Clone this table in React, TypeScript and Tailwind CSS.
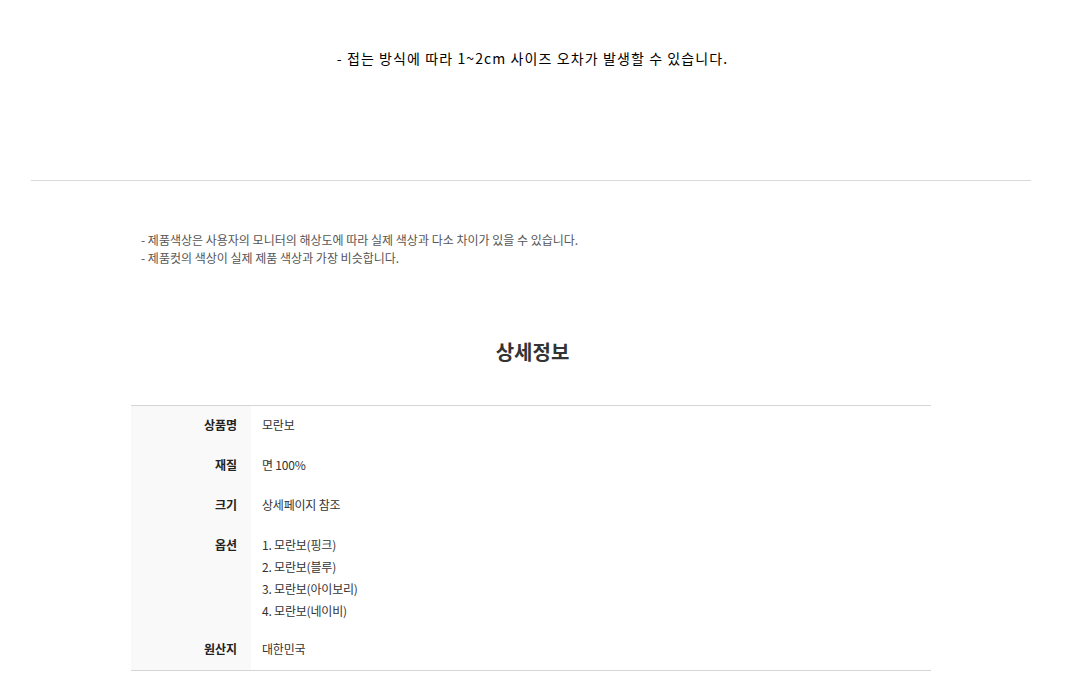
import React from 'react';

const rows: { label: string; values: string[] }[] = [
  { label: '상품명', values: ['모란보'] },
  { label: '재질', values: ['면 100%'] },
  { label: '크기', values: ['상세페이지 참조'] },
  { label: '옵션', values: ['1. 모란보(핑크)', '2. 모란보(블루)', '3. 모란보(아이보리)', '4. 모란보(네이비)'] },
  { label: '원산지', values: ['대한민국'] },
];

export default function App() {
  return (
    <div className="min-h-screen bg-white text-[#222]" style={{ fontFamily: '"Noto Sans CJK KR", "Noto Sans", sans-serif' }}>
      {/* size notice */}
      <div className="pt-[47px] h-[180px] text-center text-[14px] leading-[22px] text-black tracking-[1.1px]">
        - 접는 방식에 따라 1~2cm 사이즈 오차가 발생할 수 있습니다.
      </div>

      <div className="mx-[31px] w-[1000px] border-t border-[#d9d9d9]" />

      {/* colour notes */}
      <div className="pl-[141px] pt-[50px] text-[12px] leading-[18px] text-[#555]">
        <p>- 제품색상은 사용자의 모니터의 해상도에 따라 실제 색상과 다소 차이가 있을 수 있습니다.</p>
        <p>- 제품컷의 색상이 실제 제품 색상과 가장 비슷합니다.</p>
      </div>

      {/* detail info */}
      <h2 className="mt-[70px] text-center text-[20px] leading-[30px] font-bold text-[#333]">상세정보</h2>

      <div className="mt-[38px] ml-[131px] w-[800px] border-t border-b border-[#d5d5d5]">
        {rows.map((row) => (
          <div key={row.label} className="flex">
            <div className="w-[120px] shrink-0 bg-[#f9f9f9] pr-[14px] pt-[8px] pb-[10px] text-right text-[12px] leading-[22px] font-bold text-[#222]">
              {row.label}
            </div>
            <div className={`pl-[11px] pt-[8px] text-[12px] leading-[22px] text-[#333] tracking-[-0.2px] ${row.values.length > 1 ? 'pb-[8px]' : 'pb-[10px]'}`}>
              {row.values.map((v) => (
                <div key={v}>{v}</div>
              ))}
            </div>
          </div>
        ))}
      </div>
    </div>
  );
}
